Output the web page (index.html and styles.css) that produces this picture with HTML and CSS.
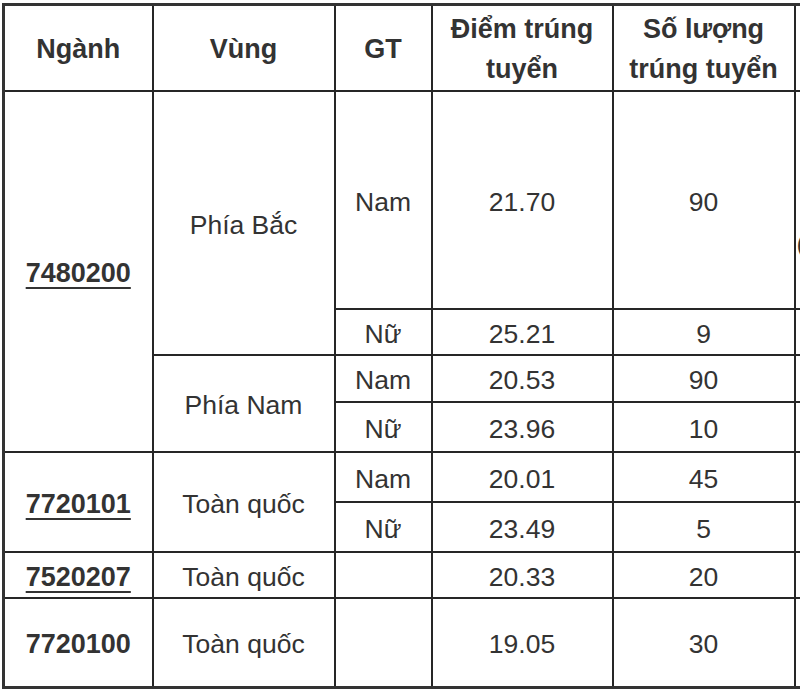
FILE: index.html
```html
<!DOCTYPE html>
<html lang="vi">
<head>
<meta charset="utf-8">
<title>Điểm trúng tuyển</title>
<link rel="stylesheet" href="styles.css">
</head>
<body>
<div class="wrap">
<table class="scores">
  <colgroup>
    <col class="c-code">
    <col class="c-region">
    <col class="c-gender">
    <col class="c-score">
    <col class="c-count">
    <col class="c-extra">
  </colgroup>
  <thead>
    <tr class="r-head">
      <th>Ngành</th>
      <th>Vùng</th>
      <th>GT</th>
      <th>Điểm trúng tuyển</th>
      <th>Số lượng trúng tuyển</th>
      <th class="extra"></th>
    </tr>
  </thead>
  <tbody>
    <tr class="r1">
      <td rowspan="4" class="code"><a href="#">7480200</a></td>
      <td rowspan="2">Phía Bắc</td>
      <td>Nam</td>
      <td>21.70</td>
      <td>90</td>
      <td class="extra"><span class="peek">(</span></td>
    </tr>
    <tr class="r2">
      <td>Nữ</td>
      <td>25.21</td>
      <td>9</td>
      <td class="extra"></td>
    </tr>
    <tr class="r3">
      <td rowspan="2">Phía Nam</td>
      <td>Nam</td>
      <td>20.53</td>
      <td>90</td>
      <td class="extra"></td>
    </tr>
    <tr class="r4">
      <td>Nữ</td>
      <td>23.96</td>
      <td>10</td>
      <td class="extra"></td>
    </tr>
    <tr class="r5">
      <td rowspan="2" class="code"><a href="#">7720101</a></td>
      <td rowspan="2">Toàn quốc</td>
      <td>Nam</td>
      <td>20.01</td>
      <td>45</td>
      <td class="extra"></td>
    </tr>
    <tr class="r6">
      <td>Nữ</td>
      <td>23.49</td>
      <td>5</td>
      <td class="extra"></td>
    </tr>
    <tr class="r7">
      <td class="code"><a href="#">7520207</a></td>
      <td>Toàn quốc</td>
      <td></td>
      <td>20.33</td>
      <td>20</td>
      <td class="extra"></td>
    </tr>
    <tr class="r8">
      <td class="code">7720100</td>
      <td>Toàn quốc</td>
      <td></td>
      <td>19.05</td>
      <td>30</td>
      <td class="extra"></td>
    </tr>
  </tbody>
</table>
</div>
</body>
</html>
```

FILE: styles.css
```css
html, body {
  margin: 0;
  padding: 0;
  background: #ffffff;
}

body {
  width: 800px;
  height: 689px;
  overflow: hidden;
  font-family: "Liberation Sans", Arial, "Noto Sans", sans-serif;
  color: #333333;
}

.wrap {
  padding: 3px 0 0 2px;
}

.scores {
  border-collapse: collapse;
  table-layout: fixed;
  width: 991px;
  border: 3px solid #333333;
  font-size: 26.5px;
  line-height: 36px;
}

.c-code { width: 149px; }
.c-region { width: 182px; }
.c-gender { width: 97px; }
.c-score { width: 181px; }
.c-count { width: 182px; }
.c-extra { width: 200px; }

.scores th,
.scores td {
  border: 2px solid #262626;
  padding: 4px 3px 0;
  text-align: center;
  vertical-align: middle;
}

.scores th {
  font-weight: bold;
  font-size: 27px;
  line-height: 40px;
  padding-top: 3px;
}

.r-head { height: 86px; }
.r1 { height: 218px; }
.r2 { height: 46px; }
.r3 { height: 47px; }
.r4 { height: 50px; }
.r5 { height: 50px; }
.r6 { height: 50px; }
.r7 { height: 46px; }
.r8 { height: 90px; }

.code {
  font-weight: bold;
  font-size: 27px;
}

.code a {
  color: #333333;
  text-decoration: underline;
  text-decoration-thickness: 2px;
  text-underline-offset: 5px;
}

.scores .extra {
  text-align: left;
  padding-left: 1px;
}

.peek {
  display: inline-block;
  padding-top: 84px;
  color: #333333;
}
```
